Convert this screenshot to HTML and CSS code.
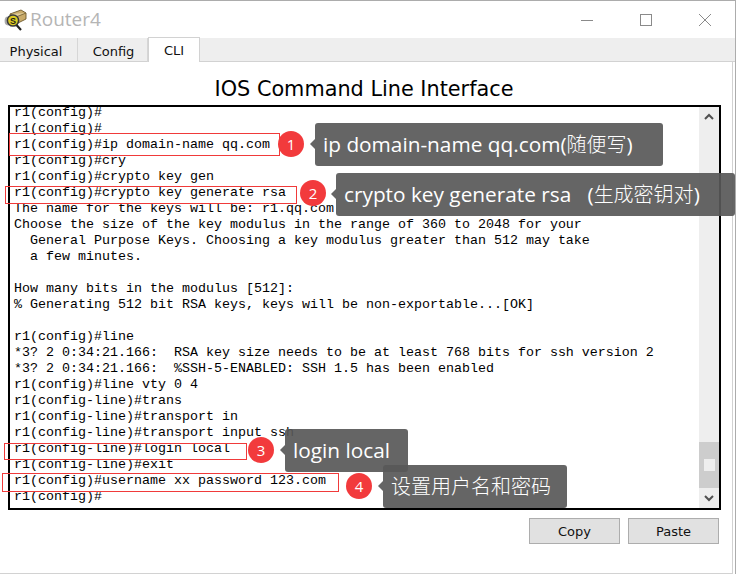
FILE: index.html
```html
<!DOCTYPE html>
<html lang="en">
<head>
<meta charset="utf-8">
<title>Router4</title>
<link rel="stylesheet" href="styles.css">
</head>
<body>
<div class="window">
  <header class="titlebar">
    <svg class="app-icon" width="24" height="24" viewBox="0 0 24 24">
      <path d="M6 7 L17 3 L22 6 L22 12 L12 17 L7 14 Z" fill="#c9ab6a" stroke="#6e5a2c" stroke-width=".9"/>
      <path d="M6 7 L12 10 L22 6" fill="#e2cf9c" stroke="#6e5a2c" stroke-width=".8"/>
      <ellipse cx="4" cy="14" rx="3.4" ry="4.4" fill="#8b8b8b" opacity=".75"/>
      <circle cx="9" cy="13.5" r="5.6" fill="#dccb22" stroke="#3a3a3a" stroke-width="1.5"/>
      <text class="icon-letter" x="9" y="17" text-anchor="middle">S</text>
      <path d="M12.5 18 L17 23" stroke="#222" stroke-width="2.2"/>
    </svg>
    <span class="app-title">Router4</span>
    <div class="win-controls">
      <svg class="win-btn" width="14" height="14" viewBox="0 0 14 14"><path d="M1 7.5 H13" stroke="#8a8a8a"/></svg>
      <svg class="win-btn" width="14" height="14" viewBox="0 0 14 14"><rect x="1.5" y="1.5" width="11" height="11" fill="none" stroke="#8a8a8a"/></svg>
      <svg class="win-btn" width="14" height="14" viewBox="0 0 14 14"><path d="M1 1 L13 13 M13 1 L1 13" stroke="#8a8a8a"/></svg>
    </div>
  </header>
  <nav class="tabs">
    <div class="tab tab-physical">Physical</div>
    <div class="tab tab-config">Config</div>
    <div class="tab tab-cli">CLI</div>
  </nav>
  <main class="panel">
    <h1 class="heading">IOS Command Line Interface</h1>
    <div class="terminal">
      <pre class="output">r1(config)#
r1(config)#
r1(config)#ip domain-name qq.com
r1(config)#cry
r1(config)#crypto key gen
r1(config)#crypto key generate rsa
The name for the keys will be: r1.qq.com
Choose the size of the key modulus in the range of 360 to 2048 for your
  General Purpose Keys. Choosing a key modulus greater than 512 may take
  a few minutes.

How many bits in the modulus [512]:
% Generating 512 bit RSA keys, keys will be non-exportable...[OK]

r1(config)#line
*3? 2 0:34:21.166:  RSA key size needs to be at least 768 bits for ssh version 2
*3? 2 0:34:21.166:  %SSH-5-ENABLED: SSH 1.5 has been enabled
r1(config)#line vty 0 4
r1(config-line)#trans
r1(config-line)#transport in
r1(config-line)#transport input ssh
r1(config-line)#login local
r1(config-line)#exit
r1(config)#username xx password 123.com
r1(config)#</pre>
      <div class="scrollbar">
        <svg class="arrow" width="20" height="20" viewBox="0 0 20 20"><path d="M6 12 L10 8 L14 12" fill="none" stroke="#505050" stroke-width="2"/></svg>
        <div class="track"><div class="thumb"><span class="grip"></span></div></div>
        <svg class="arrow" width="20" height="20" viewBox="0 0 20 20"><path d="M6 8 L10 12 L14 8" fill="none" stroke="#505050" stroke-width="2"/></svg>
      </div>
    </div>
    <div class="actions">
      <button class="btn">Copy</button>
      <button class="btn">Paste</button>
    </div>
  </main>

  <div class="mark mark-1"></div>
  <div class="mark mark-2"></div>
  <div class="mark mark-3"></div>
  <div class="mark mark-4"></div>
  <div class="badge badge-1">1</div>
  <div class="badge badge-2">2</div>
  <div class="badge badge-3">3</div>
  <div class="badge badge-4">4</div>
  <div class="note note-1">ip domain-name qq.com(<span class="cjk">随便写</span>)</div>
  <div class="note note-2">crypto key generate rsa &nbsp;&nbsp;(<span class="cjk">生成密钥对</span>)</div>
  <div class="note note-3">login local</div>
  <div class="note note-4"><span class="cjk">设置用户名和密码</span></div>
</div>
</body>
</html>
```
FILE: styles.css
```css
* { box-sizing: border-box; }
html, body { margin: 0; padding: 0; background: #fff; }
.window {
  position: relative;
  width: 736px;
  height: 574px;
  overflow: hidden;
  display: flex;
  flex-direction: column;
  background: #fff;
  border-top: 1px solid #acacac;
  border-right: 1px solid #acacac;
}
.titlebar {
  height: 37px;
  display: flex;
  align-items: center;
  padding-left: 4px;
  flex: none;
}
.app-icon { margin-right: 2px; margin-top: -1px; }
.icon-letter { font: 700 9px "Liberation Sans", sans-serif; fill: #1b1b1b; }
.app-title {
  font: 19px "Open Sans", sans-serif;
  color: #b5b5b5;
  margin-top: -2px;
}
.win-controls {
  margin-left: auto;
  display: flex;
  gap: 45px;
  padding-right: 23px;
}
.tabs {
  height: 24px;
  flex: none;
  display: flex;
  background: #eeeeee;
  border-bottom: 1px solid #d2d2d2;
  position: relative;
}
.tab {
  font: 13px "DejaVu Sans", sans-serif;
  color: #111;
  display: flex;
  align-items: center;
  justify-content: center;
  height: 24px;
  padding-top: 2px;
  border-right: 1px solid #d6d6d6;
}
.tab-physical { width: 78px; padding-right: 5px; }
.tab-config { width: 70px; padding-left: 2px; }
.tab-cli {
  width: 52px;
  height: 25px;
  margin-top: -1px;
  padding-top: 1px;
  background: #fff;
  border: 1px solid #d2d2d2;
  border-bottom: 0;
  z-index: 1;
}
.panel {
  flex: 1;
  display: flex;
  flex-direction: column;
  width: 733px;
  border-right: 1px solid #d2d2d2;
  border-bottom: 1px solid #d2d2d2;
  padding: 0 12px 0 8px;
}
.heading {
  margin: 14px 0 0;
  height: 29px;
  font: 400 20.8px/26px "DejaVu Sans", sans-serif;
  color: #000;
  text-align: center;
}
.terminal {
  height: 405px;
  width: 713px;
  border: 2px solid #000;
  display: flex;
  overflow: hidden;
}
.output {
  flex: 1;
  margin: -2px 0 0;
  padding-left: 4px;
  font: 13.33px/16px "Liberation Mono", monospace;
  color: #000;
  overflow: hidden;
  white-space: pre;
}
.scrollbar {
  width: 20px;
  flex: none;
  display: flex;
  flex-direction: column;
  background: #eeeeee;
}
.arrow { flex: none; }
.track {
  flex: 1;
  display: flex;
  flex-direction: column;
  justify-content: flex-end;
}
.thumb {
  height: 46px;
  background: #cdcdcd;
  display: flex;
  align-items: center;
  justify-content: center;
}
.grip { width: 11px; height: 12px; background: #eeeeee; }
.actions {
  display: flex;
  justify-content: flex-end;
  gap: 8px;
  margin-top: 8px;
  width: 711px;
}
.btn {
  width: 91px;
  height: 26px;
  padding: 0;
  background: #e1e1e1;
  border: 1px solid #adadad;
  font: 13px "DejaVu Sans", sans-serif;
  color: #111;
}
.mark { position: absolute; border: 1px solid #f03a3a; }
.mark-1 { left: 9px; top: 132px; width: 271px; height: 23px; }
.mark-2 { left: 5px; top: 185px; width: 292px; height: 18px; }
.mark-3 { left: 4px; top: 442px; width: 243px; height: 17px; }
.mark-4 { left: 2px; top: 472px; width: 337px; height: 19px; }
.badge {
  position: absolute;
  width: 26px;
  height: 26px;
  border-radius: 50%;
  background: #f23a3c;
  color: #fff;
  font: 15px/26px "Open Sans", sans-serif;
  text-align: center;
}
.badge-1 { left: 278px; top: 130px; }
.badge-2 { left: 300px; top: 179px; }
.badge-3 { left: 248px; top: 436px; }
.badge-4 { left: 346px; top: 472px; }
.note {
  position: absolute;
  height: 43px;
  border-radius: 3px;
  background: rgba(88, 88, 88, .92);
  color: #fff;
  font: 20.8px/42px "Open Sans", "Noto Sans CJK SC", sans-serif;
  padding-left: 8px;
  white-space: nowrap;
}
.note::before {
  content: "";
  position: absolute;
  left: -5px;
  top: 16px;
  border-style: solid;
  border-width: 5px 5px 5px 0;
  border-color: transparent rgba(88, 88, 88, .92) transparent transparent;
}
.cjk { font-size: 20px; font-family: "Noto Sans CJK SC", sans-serif; font-weight: 300; }
.note-1 { left: 315px; top: 122px; width: 348px; }
.note-2 { left: 336px; top: 172px; width: 399px; }
.note-3 { left: 285px; top: 428px; width: 123px; }
.note-4 { left: 383px; top: 464px; width: 184px; }
```
